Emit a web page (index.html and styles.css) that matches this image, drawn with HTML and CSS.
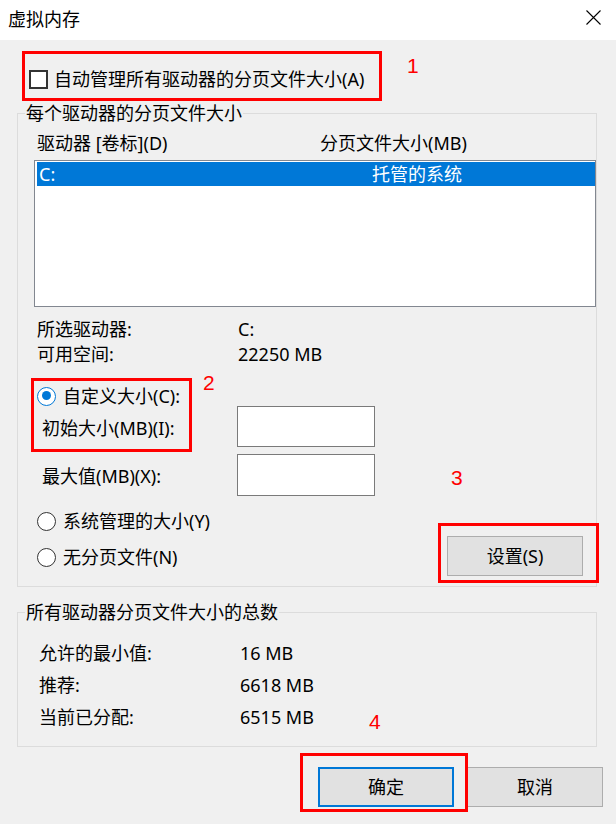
FILE: index.html
```html
<!DOCTYPE html>
<html lang="zh-CN">
  <head>
    <meta charset="UTF-8" />
    <meta name="viewport" content="width=device-width, initial-scale=1.0" />
    <title>虚拟内存</title>
    <link rel="stylesheet" href="styles.css">
  </head>
  <body>
    <div class="dialog">
      <div class="titlebar">
        <span class="title">虚拟内存</span>
        <svg class="close" width="15" height="15" viewBox="0 0 15 15">
          <path d="M0.5 0.5L14.5 14.5M14.5 0.5L0.5 14.5" stroke="#000" stroke-width="1.1" fill="none" />
        </svg>
      </div>

      <div class="content">
        <div class="check-row">
          <span class="checkbox"></span>
          <span>自动管理所有驱动器的分页文件大小(A)</span>
        </div>

        <fieldset class="group group-drives">
          <legend>每个驱动器的分页文件大小</legend>

          <div class="list-head">
            <span>驱动器 [卷标](D)</span>
            <span>分页文件大小(MB)</span>
          </div>
          <div class="listbox">
            <div class="list-row selected">
              <span>C:</span>
              <span>托管的系统</span>
            </div>
          </div>

          <div class="info-grid">
            <span>所选驱动器:</span><span>C:</span>
            <span>可用空间:</span><span>22250 MB</span>
          </div>

          <div class="radio-row first">
            <span class="radio checked"></span>
            <span>自定义大小(C):</span>
          </div>

          <div class="size-grid">
            <span class="size-label">初始大小(MB)(I):</span>
            <span class="textbox"></span>
            <span class="size-label">最大值(MB)(X):</span>
            <span class="textbox"></span>
          </div>

          <div class="bottom-row">
            <div class="radio-list">
              <div class="radio-row">
                <span class="radio"></span>
                <span>系统管理的大小(Y)</span>
              </div>
              <div class="radio-row">
                <span class="radio"></span>
                <span>无分页文件(N)</span>
              </div>
            </div>
            <button class="btn btn-set">设置(S)</button>
          </div>
        </fieldset>

        <fieldset class="group group-total">
          <legend>所有驱动器分页文件大小的总数</legend>
          <div class="total-grid">
            <span>允许的最小值:</span><span>16 MB</span>
            <span>推荐:</span><span>6618 MB</span>
            <span>当前已分配:</span><span>6515 MB</span>
          </div>
        </fieldset>

        <div class="actions">
          <button class="btn btn-default">确定</button>
          <button class="btn">取消</button>
        </div>
      </div>

      <!-- red annotations drawn over the dialog -->
      <div class="mark mark-1"></div>
      <div class="num num-1">1</div>
      <div class="mark mark-2"></div>
      <div class="num num-2">2</div>
      <div class="mark mark-3"></div>
      <div class="num num-3">3</div>
      <div class="mark mark-4"></div>
      <div class="num num-4">4</div>
    </div>
  </body>
</html>
```

FILE: styles.css
```css
* {
  box-sizing: border-box;
}

body {
  margin: 0;
  background: #f0f0f0;
  color: #000;
  font-family: "Noto Sans", "Noto Sans CJK SC", sans-serif;
  font-size: 18px;
  line-height: 24px;
}

.dialog {
  position: relative;
  width: 616px;
  height: 824px;
  overflow: hidden;
}

.titlebar {
  display: flex;
  align-items: center;
  height: 40px;
  padding: 0 15px 2px 8px;
  background: #fff;
}

.close {
  align-self: flex-start;
  margin-top: 10px;
  margin-left: auto;
}

.content {
  padding: 0 13px 0 17px;
}

.check-row {
  display: flex;
  align-items: center;
  gap: 6px;
  height: 24px;
  margin-top: 27px;
  padding-left: 12px;
}

.checkbox {
  width: 19px;
  height: 19px;
  border: 2px solid #333;
  background: #fff;
}

.group {
  width: 580px;
  min-width: 0;
  margin: 0;
  padding: 0;
  border: 1px solid #dcdcdc;
}

.group legend {
  margin-left: 7px;
  padding: 0 1px;
  line-height: 24px;
}

.group-drives {
  margin-top: 10px;
  padding-bottom: 10px;
}

.list-head {
  display: grid;
  grid-template-columns: 283px auto;
  margin-top: 6px;
  padding-left: 19px;
}

.listbox {
  height: 147px;
  margin-top: 5px;
  margin-left: 16px;
  padding: 1px 0 0 2px;
  border: 1px solid #828790;
  background: #fff;
}

.list-row {
  display: grid;
  grid-template-columns: 333px auto;
  height: 24px;
  padding-left: 2px;
}

.list-row.selected {
  background: #0078d7;
  color: #fff;
}

.info-grid {
  display: grid;
  grid-template-columns: 201px auto;
  grid-auto-rows: 25px;
  line-height: 25px;
  margin-top: 10px;
  padding-left: 19px;
}

.radio-row {
  display: flex;
  align-items: center;
  gap: 7px;
  height: 20px;
  line-height: 20px;
}

.radio-row.first {
  margin-top: 19px;
  padding-left: 19px;
}

.radio {
  position: relative;
  width: 19px;
  height: 19px;
  border: 1.5px solid #333;
  border-radius: 50%;
  background: #fff;
}

.radio.checked {
  border-color: #0078d7;
}

.radio.checked::after {
  content: "";
  position: absolute;
  top: 3.5px;
  left: 3.5px;
  width: 9px;
  height: 9px;
  border-radius: 50%;
  background: #0078d7;
}

.size-grid {
  display: grid;
  grid-template-columns: 195px 138px;
  grid-template-rows: 41px 42px;
  row-gap: 7px;
  align-items: center;
  padding-left: 24px;
}

.size-label {
  padding-top: 2px;
}

.textbox {
  height: 100%;
  border: 1px solid #7a7a7a;
  background: #fff;
}

.bottom-row {
  display: flex;
  justify-content: space-between;
  margin-top: 15px;
  padding: 0 13px 0 19px;
}

.radio-list {
  display: flex;
  flex-direction: column;
  gap: 16px;
}

.btn {
  width: 136px;
  height: 40px;
  padding: 0;
  border: 1px solid #adadad;
  background: #e1e1e1;
  color: #000;
  font: inherit;
}

.btn-set {
  margin-top: 25px;
}

.btn-default {
  border: 2px solid #0078d7;
}

.group-total {
  margin-top: 13px;
  padding-bottom: 13px;
}

.total-grid {
  display: grid;
  grid-template-columns: 201px auto;
  grid-auto-rows: 32px;
  line-height: 32px;
  margin-top: 13px;
  padding-left: 21px;
}

.actions {
  display: flex;
  justify-content: flex-end;
  gap: 13px;
  margin-top: 20px;
}

/* annotations */
.mark {
  position: absolute;
  border: 3px solid #f00;
}

.mark-1 {
  top: 51px;
  left: 22px;
  width: 360px;
  height: 50px;
}

.mark-2 {
  top: 378px;
  left: 31px;
  width: 161px;
  height: 74px;
}

.mark-3 {
  top: 523px;
  left: 438px;
  width: 161px;
  height: 60px;
}

.mark-4 {
  top: 753px;
  left: 300px;
  width: 168px;
  height: 59px;
}

.num {
  position: absolute;
  color: #f00;
  font-family: "Liberation Sans", Arial, sans-serif;
  font-size: 21px;
  line-height: 21px;
}

.num-1 {
  top: 55px;
  left: 407px;
}

.num-2 {
  top: 372px;
  left: 203px;
}

.num-3 {
  top: 467px;
  left: 451px;
}

.num-4 {
  top: 711px;
  left: 369px;
}
```
